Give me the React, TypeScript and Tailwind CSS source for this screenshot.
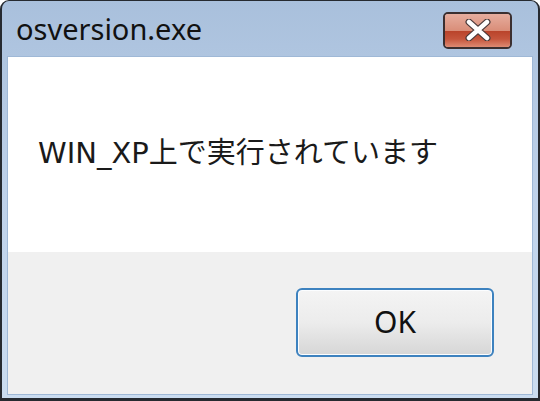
export default function App() {
  return (
    <div className="w-[540px] h-[401px] bg-white">
      {/* window frame */}
      <div className="h-full flex flex-col rounded-t-[9px] border-x-2 border-t border-b-[3px] border-[#262a30] bg-gradient-to-b from-[#a9c0dc] via-[#bfd2ea] to-[#cadcf0]">
        {/* title bar */}
        <div className="h-[56px] shrink-0 flex items-center justify-between pl-[14px] pr-[26px]">
          <span className="text-[29px] leading-none text-[#111] font-['Noto_Sans',sans-serif] pb-[2px]">
            osversion.exe
          </span>
          <CloseButton />
        </div>
        {/* client area */}
        <div className="flex-1 flex flex-col mx-[6px] mb-[4px] shadow-[0_0_0_1px_#9fb8d6]">
          <div className="h-[195px] bg-white flex items-center pl-[30px] pb-[2px]">
            <span className="text-[29px] leading-none text-[#1a1a1a] font-['DejaVu_Sans','Noto_Sans_CJK_JP',sans-serif]">
              WIN_XP上で実行されています
            </span>
          </div>
          <div className="flex-1 bg-[#f0f0f0] flex items-center justify-end pr-[38px] pb-[1px]">
            <button className="w-[198px] h-[69px] rounded-[6px] border-2 border-[#3d82bf] bg-gradient-to-b from-[#f4f4f4] via-[#ececec] to-[#d6d6d6] shadow-[inset_0_0_0_1px_#fbfdff] flex items-center justify-center">
              <span className="text-[30px] leading-none text-[#111] font-['Noto_Sans',sans-serif] pb-[2px]">
                OK
              </span>
            </button>
          </div>
        </div>
      </div>
    </div>
  );
}

function CloseButton() {
  return (
    <div className="w-[69px] h-[37px] mt-[2px] rounded-[5px] border-2 border-[#3b2f30] overflow-hidden flex flex-col relative shadow-[inset_0_0_0_1px_#f0c0b0]">
      <div className="h-[17px] bg-gradient-to-b from-[#e6ad9e] to-[#d98d78]" />
      <div className="flex-1 bg-gradient-to-b from-[#b9432a] via-[#c5553c] to-[#dd8a72]" />
      {/* X glyph */}
      <svg
        className="absolute inset-0 m-auto"
        width="30"
        height="22"
        viewBox="0 0 30 22"
      >
        <path
          d="M6 3 L24 19 M24 3 L6 19"
          stroke="#4a3a3a"
          strokeWidth="7"
          strokeLinecap="round"
          fill="none"
        />
        <path
          d="M6 3 L24 19 M24 3 L6 19"
          stroke="#ffffff"
          strokeWidth="4.5"
          strokeLinecap="round"
          fill="none"
        />
      </svg>
    </div>
  );
}
